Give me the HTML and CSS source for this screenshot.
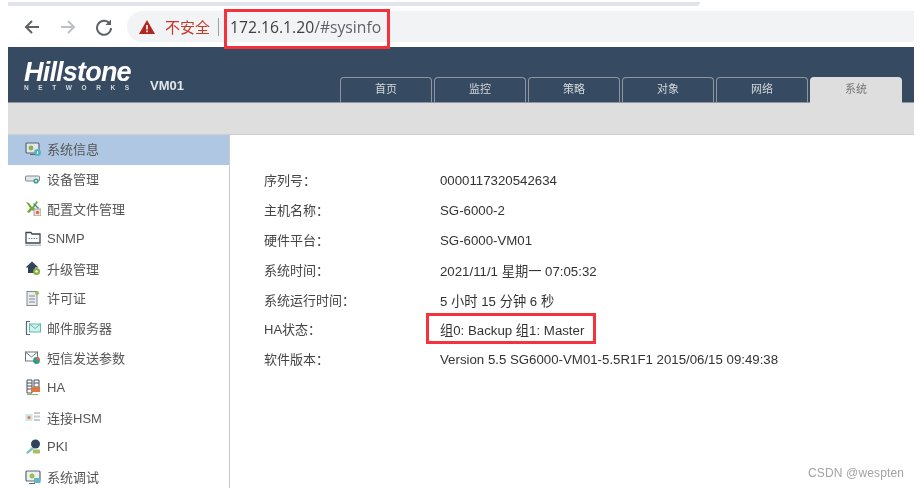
FILE: index.html
```html
<!DOCTYPE html>
<html lang="zh">
<head>
<meta charset="utf-8">
<title>Hillstone</title>
<link rel="stylesheet" href="styles.css">
</head>
<body>
<div class="page">
  <div class="strip"></div>
  <div class="browser">
    <div class="nav">
      <svg class="nav-ic" viewBox="0 0 18 18"><path d="M16 9H3M9 3L3 9l6 6" fill="none" stroke="#5f6368" stroke-width="2"/></svg>
      <svg class="nav-ic" viewBox="0 0 18 18"><path d="M2 9h13M9 3l6 6-6 6" fill="none" stroke="#bdc1c6" stroke-width="2"/></svg>
      <svg class="nav-ic" viewBox="0 0 18 18"><path d="M14.5 5.5A7 7 0 1 0 16 10" fill="none" stroke="#5f6368" stroke-width="2"/><path d="M16 1.5V7h-5.5z" fill="#5f6368"/></svg>
    </div>
    <div class="pill">
      <svg class="warn" viewBox="0 0 16 14"><path d="M8 0l8 14H0z" fill="#b3261e"/><path d="M7.2 5h1.6v4.6H7.2zM7.2 10.6h1.6v1.6H7.2z" fill="#fff"/></svg>
      <span class="insecure">不安全</span>
      <span class="sep"></span>
      <span class="url">172.16.1.20<span class="url-dim">/#sysinfo</span></span>
    </div>
  </div>
  <header class="head">
    <div class="logo">
      <div class="logo-name">Hillstone</div>
      <div class="logo-sub">NETWORKS</div>
    </div>
    <div class="model">VM01</div>
    <nav class="tabs">
      <a class="tab">首页</a>
      <a class="tab">监控</a>
      <a class="tab">策略</a>
      <a class="tab">对象</a>
      <a class="tab">网络</a>
      <a class="tab active">系统</a>
    </nav>
  </header>
  <div class="subbar"></div>
  <div class="main">
    <aside class="side">
      <div class="item sel"><svg viewBox="0 0 16 16"><rect x="1" y="2" width="13" height="10" rx="1" fill="#dfe6ee" stroke="#5a6672" stroke-width="1.2"/><circle cx="6" cy="7" r="2.4" fill="#8fb04a"/><circle cx="12.5" cy="11.5" r="3.5" fill="#55b3c4"/><path d="M12.500 10v3" stroke="#fff"/><path d="M5 13.500h5" stroke="#5a6672"/></svg>系统信息</div>
      <div class="item"><svg viewBox="0 0 16 16"><rect x="0.5" y="5" width="14" height="5" rx="1" fill="#e4e7ea" stroke="#7c8790"/><circle cx="11" cy="10" r="2.6" fill="#3f9c90"/><circle cx="11" cy="10" r="0.9" fill="#fff"/></svg>设备管理</div>
      <div class="item"><svg viewBox="0 0 16 16"><path d="M1 2l3 1 3 4 3-3 1-3 2 1-2 3-2 3 1 1-2 2-1-1-3 3-2-1 3-4-2-3z" fill="#77a93a"/><path d="M9 3l5 5-1 1-5-5z" fill="#3d8f86"/><rect x="9" y="9" width="7" height="7" fill="#e8e2dd" stroke="#8b8f93" stroke-width=".8"/><circle cx="12.500" cy="12.500" r="1.700" fill="#de6b45"/></svg>配置文件管理</div>
      <div class="item"><svg viewBox="0 0 16 16"><path d="M1 2.500h5l1 1.500h8v9H1z" fill="#fff" stroke="#39454f" stroke-width="1.300"/><path d="M3.500 8.500h9" stroke="#7f8992" stroke-dasharray="1.500 1"/><path d="M0.500 15.200h15" stroke="#39454f" stroke-dasharray="1 1"/></svg>SNMP</div>
      <div class="item"><svg viewBox="0 0 16 16"><path d="M7 1.500L0.500 7.500H3V13h7V7.500h3.500z" fill="#2f4459"/><circle cx="11.500" cy="11.500" r="3.500" fill="#8aab3e"/><circle cx="11.500" cy="11.500" r="1.200" fill="#fff"/></svg>升级管理</div>
      <div class="item"><svg viewBox="0 0 16 16"><rect x="2" y="1.500" width="10" height="14" fill="#e9edf0" stroke="#7d8993"/><path d="M4 6h6M4 9h6M4 12h6" stroke="#7d8993"/><circle cx="12" cy="3" r="2" fill="#9cbc54"/></svg>许可证</div>
      <div class="item"><svg viewBox="0 0 16 16"><path d="M5 1.500H1.500v13H5" fill="none" stroke="#5a6672" stroke-width="1.200"/><rect x="4.500" y="4" width="11" height="8" fill="#d4f0ec" stroke="#58bdb2"/><path d="M4.500 4L10 8.500 15.500 4" fill="none" stroke="#58bdb2"/></svg>邮件服务器</div>
      <div class="item"><svg viewBox="0 0 16 16"><rect x="0.500" y="3" width="12" height="9" fill="#fff" stroke="#6a7680"/><path d="M0.500 3l6 5 6-5" fill="none" stroke="#6a7680"/><circle cx="11.500" cy="11.500" r="3.400" fill="#2a9a8a"/><path d="M11.500 11.500V8a3.400 3.400 0 0 1 3.400 3.400z" fill="#e2683f"/></svg>短信发送参数</div>
      <div class="item"><svg viewBox="0 0 16 16"><path d="M2 1h5v13H2zM9 1h5v7H9z" fill="#fff" stroke="#46525e"/><path d="M2 4h5M2 7h5M2 10h5M9 4h5" stroke="#46525e"/><rect x="6" y="8" width="9" height="5" fill="#e0763f"/><path d="M2 15.500h11" stroke="#93b55a"/></svg>HA</div>
      <div class="item"><svg viewBox="0 0 16 16"><rect x="0.500" y="5" width="7" height="7" fill="#cfe6e3"/><circle cx="4" cy="8.500" r="1.600" fill="#e27b5a"/><path d="M9 3h6v2H9zM9 6.500h6v2H9zM9 10h6v2H9z" fill="#c5cbd0"/></svg>连接HSM</div>
      <div class="item"><svg viewBox="0 0 16 16"><circle cx="10.500" cy="5" r="4.500" fill="#2f4459"/><path d="M7 8l-6 5.500 1.500 1.500L9 10z" fill="#7ec2c4"/><rect x="8" y="10.500" width="7" height="4" rx="1" fill="#a3c063"/></svg>PKI</div>
      <div class="item"><svg viewBox="0 0 16 16"><rect x="1" y="2" width="14" height="10" rx="1" fill="#eef1f3" stroke="#5a6672" stroke-width="1.200"/><circle cx="7" cy="7" r="2.500" fill="#9cbc54"/><rect x="9" y="9" width="6.500" height="5" fill="#63b7c4"/><path d="M4 14.500h6" stroke="#5a6672"/></svg>系统调试</div>
    </aside>
    <section class="info">
      <div class="row"><span class="key">序列号：</span><span class="val">0000117320542634</span></div>
      <div class="row"><span class="key">主机名称：</span><span class="val">SG-6000-2</span></div>
      <div class="row"><span class="key">硬件平台：</span><span class="val">SG-6000-VM01</span></div>
      <div class="row"><span class="key">系统时间：</span><span class="val">2021/11/1 星期一 07:05:32</span></div>
      <div class="row"><span class="key">系统运行时间：</span><span class="val">5 小时 15 分钟 6 秒</span></div>
      <div class="row"><span class="key">HA状态：</span><span class="val">组0: Backup 组1: Master</span></div>
      <div class="row"><span class="key">软件版本：</span><span class="val">Version 5.5 SG6000-VM01-5.5R1F1 2015/06/15 09:49:38</span></div>
    </section>
  </div>
  <div class="mark mark-url"></div>
  <div class="mark mark-ha"></div>
  <div class="watermark">CSDN @wespten</div>
</div>
</body>
</html>
```
FILE: styles.css
```css
* { box-sizing: border-box; }
html, body { margin: 0; height: 100%; background: #fff; overflow: hidden; }
body { font-family: "Liberation Sans", "Noto Sans CJK SC", sans-serif; font-size: 13px; color: #333; }
.page { position: relative; width: 919px; height: 488px; padding: 2px 5px 0 8px; overflow: hidden; filter: blur(0.3px); }
.strip { height: 4px; width: 692px; background: #e1e4ea; border-radius: 0 0 6px 0; }
.browser { height: 41px; display: flex; align-items: center; padding: 5px 0; }
.nav { width: 119px; display: flex; gap: 18px; padding-left: 15px; }
.nav-ic { width: 18px; height: 18px; flex: none; }
.pill { flex: 1; height: 31px; background: #f1f3f4; border-radius: 16px 0 0 16px; display: flex; align-items: center; padding-left: 12px; }
.warn { width: 16px; height: 14px; flex: none; }
.insecure { margin-left: 10px; font-size: 15px; color: #c5392b; }
.sep { width: 1px; height: 18px; background: #9aa0a6; margin: 0 11px 0 8px; }
.url { font-family: "Open Sans", sans-serif; font-size: 15.700px; color: #3c4043; }
.url-dim { color: #5f6368; }
.head { height: 56px; background: #364a61; display: flex; align-items: flex-start; border-bottom: 1px solid #8f959c; }
.logo { width: 107px; margin: 13px 0 0 16px; color: #fff; flex: none; }
.logo-name { font-size: 27px; line-height: 24px; font-weight: 700; font-style: italic; letter-spacing: -.8px; white-space: nowrap; }
.logo-sub { font-size: 6.500px; line-height: 8px; font-weight: 700; letter-spacing: 9.600px; color: #d5dae0; white-space: nowrap; }
.model { margin: 31px 0 0 19px; width: 190px; font-size: 13px; line-height: 16px; font-weight: 700; color: #e2e6ea; flex: none; }
.tabs { display: flex; gap: 2px; margin-top: 30px; height: 25px; }
.tab { width: 92px; height: 25px; border: 1px solid #8f959c; border-bottom: 0; border-radius: 4px 4px 0 0; text-align: center; font-size: 11px; line-height: 22px; color: #d3d8de; }
.tab.active { background: #dedede; border-color: #dedede; color: #777; height: 26px; }
.subbar { height: 32px; background: #dedede; border-bottom: 1px solid #cfcfcf; }
.main { display: flex; }
.side { width: 222px; flex: none; height: 353px; border-right: 1px solid #c9c9c9; }
.item { height: 29.800px; display: flex; align-items: center; gap: 6px; padding: 0 0 2px 17px; font-size: 13px; color: #555; white-space: nowrap; }
.item svg { width: 16px; height: 16px; flex: none; }
.item.sel { background: #b0c7e4; }
.info { padding: 30px 0 0 34px; }
.row { height: 29.800px; display: flex; align-items: center; }
.key { width: 176px; flex: none; font-size: 13px; color: #444; }
.val { margin-top: 2px; font-size: 13.250px; color: #333; white-space: nowrap; }
.mark { position: absolute; border: 3px solid #f5323c; }
.mark-url { left: 224px; top: 9px; width: 166px; height: 40px; }
.mark-ha { left: 426px; top: 313px; width: 170px; height: 31px; }
.watermark { position: absolute; left: 808px; top: 466px; font-size: 12px; line-height: 14px; color: #a3a3a3; letter-spacing: .15px; }
```
